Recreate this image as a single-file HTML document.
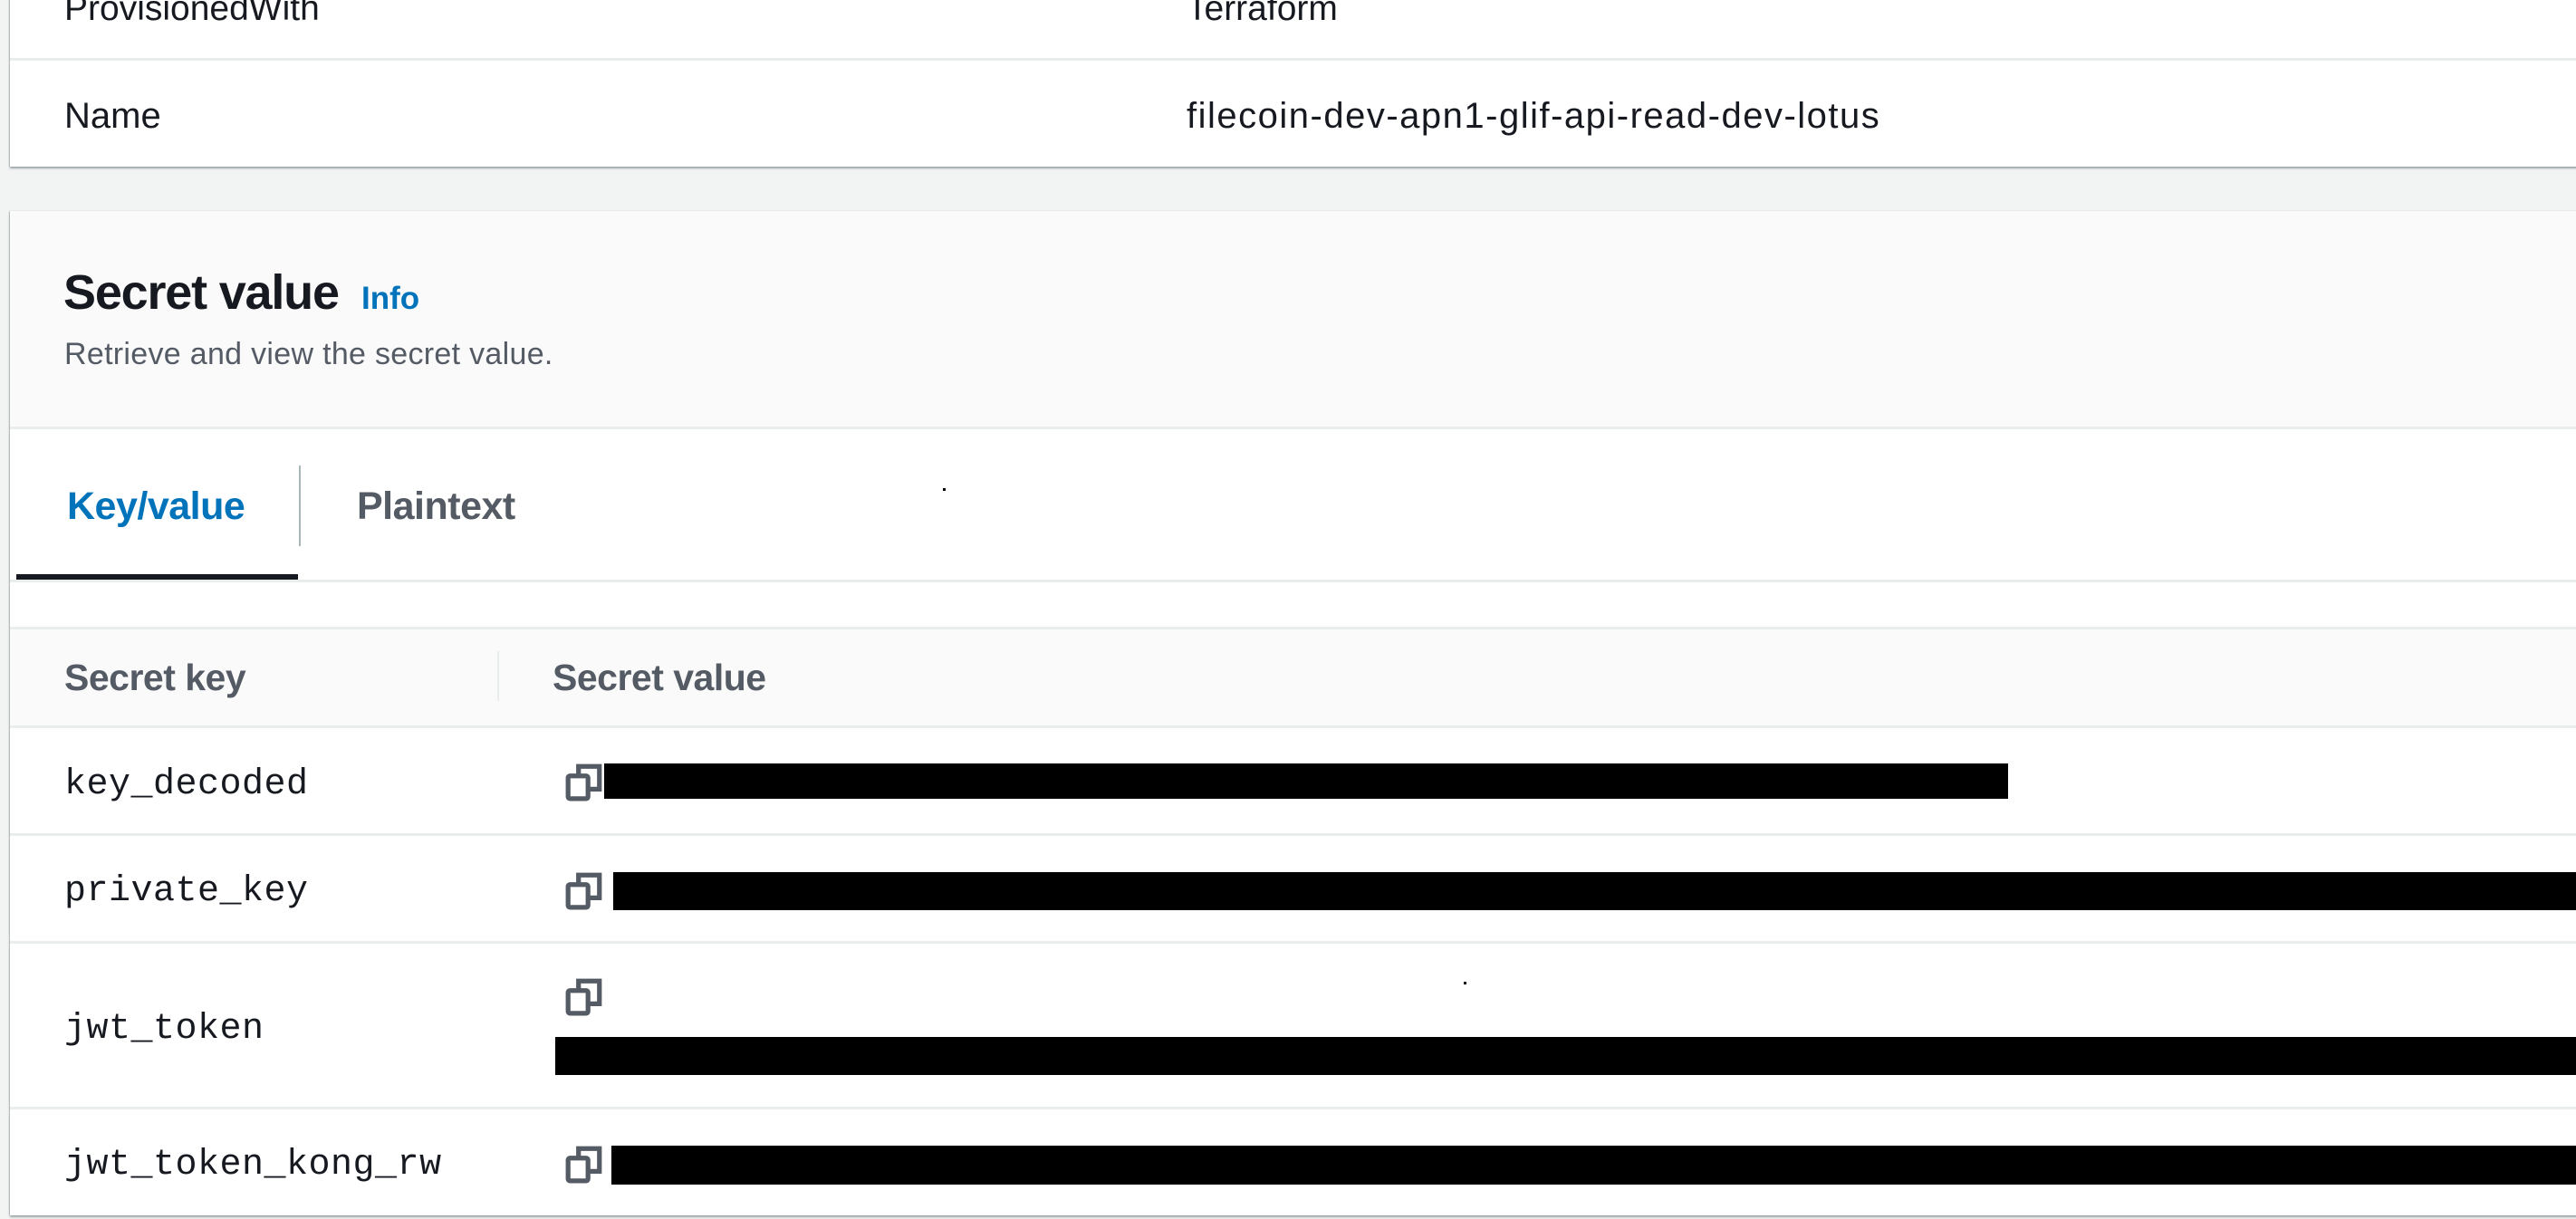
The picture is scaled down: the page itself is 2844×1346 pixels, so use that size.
<!DOCTYPE html>
<html><head><meta charset="utf-8"><style>
*{margin:0;padding:0;box-sizing:border-box}
body{width:2844px;height:1346px;background:#f2f3f3;position:relative;overflow:hidden;font-family:"Liberation Sans",Arial,sans-serif;color:#16191f}
.a{position:absolute;white-space:nowrap}
.card{position:absolute;left:11px;width:2860px;background:#fff;box-shadow:0 2px 2px rgba(0,28,36,.35),-1px 0 1px rgba(0,28,36,.2)}
.hl{position:absolute;left:11px;width:2860px;height:3px;background:#eaeded}
.mono{font-family:"Liberation Mono","DejaVu Sans Mono",monospace;font-size:40px;letter-spacing:0.5px}
.bar{position:absolute;background:#000}
.ic{position:absolute;width:42px;height:44px}
</style></head><body>
<div class="card" style="top:-10px;height:194px"></div>
<div class="a" style="left:71px;top:-12px;font-size:39px">ProvisionedWith</div>
<div class="a" style="left:1310px;top:-12px;font-size:39px">Terraform</div>
<div class="hl" style="top:64px"></div>
<div class="a" style="left:71px;top:106px;font-size:40px">Name</div>
<div class="a" style="left:1310px;top:106px;font-size:40px;letter-spacing:1.5px">filecoin-dev-apn1-glif-api-read-dev-lotus</div>

<div class="card" style="top:233px;height:1109px"></div>
<div style="position:absolute;left:11px;top:233px;width:2860px;height:241px;background:#fafafa;border-bottom:3px solid #eaeded"></div>
<div class="a" style="left:70px;top:292px;font-size:54px;font-weight:bold;letter-spacing:-1.2px">Secret value</div>
<div class="a" style="left:399px;top:310px;font-size:35px;font-weight:bold;color:#0073bb">Info</div>
<div class="a" style="left:71px;top:372px;font-size:34px;color:#545b64;letter-spacing:0.3px">Retrieve and view the secret value.</div>

<div class="a" style="left:74px;top:535px;font-size:43px;font-weight:bold;color:#0073bb;letter-spacing:-0.5px">Key/value</div>
<div style="position:absolute;left:330px;top:514px;width:2px;height:89px;background:#aab7b8"></div>
<div class="a" style="left:394px;top:535px;font-size:43px;font-weight:bold;color:#545b64;letter-spacing:-0.5px">Plaintext</div>
<div style="position:absolute;left:1041px;top:539px;width:3px;height:3px;background:#000"></div>
<div style="position:absolute;left:18px;top:634px;width:311px;height:7px;background:#16191f"></div>
<div class="hl" style="top:640px"></div>

<div style="position:absolute;left:11px;top:692px;width:2860px;height:112px;background:#fafafa;border-top:3px solid #eaeded;border-bottom:3px solid #eaeded"></div>
<div class="a" style="left:71px;top:725px;font-size:41px;font-weight:bold;color:#545b64;letter-spacing:-0.5px">Secret key</div>
<div style="position:absolute;left:549px;top:719px;width:2px;height:55px;background:#eaeded"></div>
<div class="a" style="left:610px;top:725px;font-size:41px;font-weight:bold;color:#545b64;letter-spacing:-0.5px">Secret value</div>

<div class="a mono" style="left:71px;top:844px">key_decoded</div>
<div class="hl" style="top:920px"></div>
<div class="a mono" style="left:71px;top:962px">private_key</div>
<div class="hl" style="top:1039px"></div>
<div class="a mono" style="left:71px;top:1114px">jwt_token</div>
<div class="hl" style="top:1222px"></div>
<div class="a mono" style="left:71px;top:1264px">jwt_token_kong_rw</div>

<svg class="ic" style="left:624px;top:841px" viewBox="0 0 40 42"><g fill="none" stroke="#545b64" stroke-width="5"><rect x="3" y="15" width="21" height="24" rx="2"/><path d="M14 15V5h22v24H24"/></g></svg>
<svg class="ic" style="left:624px;top:961px" viewBox="0 0 40 42"><g fill="none" stroke="#545b64" stroke-width="5"><rect x="3" y="15" width="21" height="24" rx="2"/><path d="M14 15V5h22v24H24"/></g></svg>
<svg class="ic" style="left:624px;top:1078px" viewBox="0 0 40 42"><g fill="none" stroke="#545b64" stroke-width="5"><rect x="3" y="15" width="21" height="24" rx="2"/><path d="M14 15V5h22v24H24"/></g></svg>
<svg class="ic" style="left:624px;top:1263px" viewBox="0 0 40 42"><g fill="none" stroke="#545b64" stroke-width="5"><rect x="3" y="15" width="21" height="24" rx="2"/><path d="M14 15V5h22v24H24"/></g></svg>

<div class="bar" style="left:667px;top:843px;width:1550px;height:39px"></div>
<div class="bar" style="left:677px;top:963px;width:2200px;height:42px"></div>
<div class="bar" style="left:613px;top:1145px;width:2260px;height:42px"></div>
<div class="bar" style="left:675px;top:1265px;width:2200px;height:43px"></div>
<div style="position:absolute;left:1616px;top:1084px;width:3px;height:3px;background:#000"></div>
</body></html>
